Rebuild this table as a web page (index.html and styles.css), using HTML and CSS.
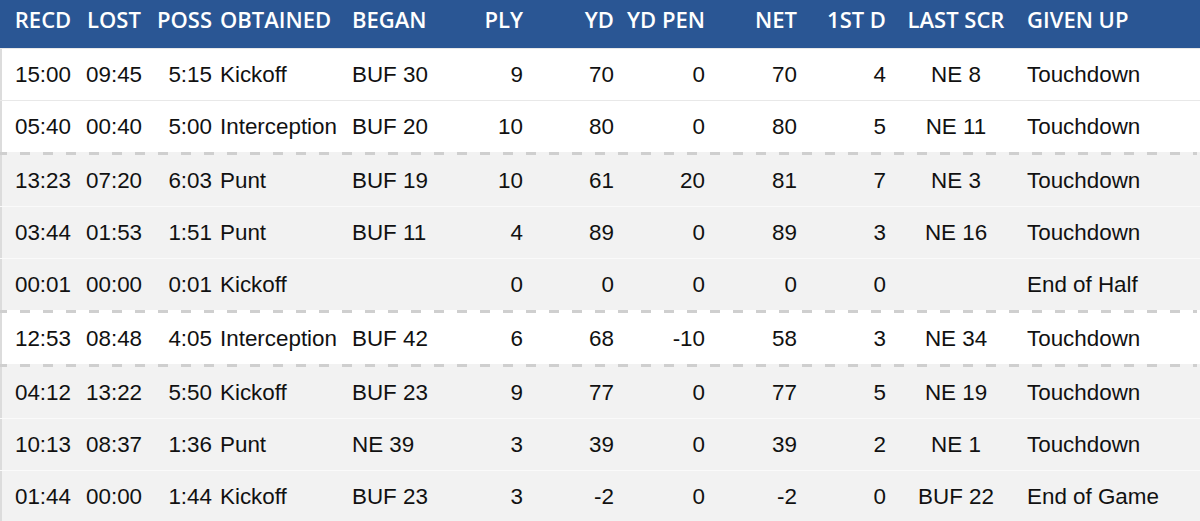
FILE: index.html
```html
<!DOCTYPE html>
<html>
<head>
<meta charset="utf-8">
<link rel="stylesheet" href="styles.css">
</head>
<body>
<div class="drives">
  <div class="row head">
    <div class="c1">RECD</div><div class="c2">LOST</div><div class="c3">POSS</div><div class="c4">OBTAINED</div><div class="c5">BEGAN</div><div class="c6">PLY</div><div class="c7">YD</div><div class="c8">YD PEN</div><div class="c9">NET</div><div class="c10">1ST D</div><div class="c11">LAST SCR</div><div class="c12">GIVEN UP</div>
  </div>
  <div class="row white">
    <div class="c1">15:00</div><div class="c2">09:45</div><div class="c3">5:15</div><div class="c4">Kickoff</div><div class="c5">BUF 30</div><div class="c6">9</div><div class="c7">70</div><div class="c8">0</div><div class="c9">70</div><div class="c10">4</div><div class="c11">NE 8</div><div class="c12">Touchdown</div>
  </div>
  <div class="row white">
    <div class="c1">05:40</div><div class="c2">00:40</div><div class="c3">5:00</div><div class="c4">Interception</div><div class="c5">BUF 20</div><div class="c6">10</div><div class="c7">80</div><div class="c8">0</div><div class="c9">80</div><div class="c10">5</div><div class="c11">NE 11</div><div class="c12">Touchdown</div>
  </div>
  <div class="row gray dash">
    <div class="c1">13:23</div><div class="c2">07:20</div><div class="c3">6:03</div><div class="c4">Punt</div><div class="c5">BUF 19</div><div class="c6">10</div><div class="c7">61</div><div class="c8">20</div><div class="c9">81</div><div class="c10">7</div><div class="c11">NE 3</div><div class="c12">Touchdown</div>
  </div>
  <div class="row gray">
    <div class="c1">03:44</div><div class="c2">01:53</div><div class="c3">1:51</div><div class="c4">Punt</div><div class="c5">BUF 11</div><div class="c6">4</div><div class="c7">89</div><div class="c8">0</div><div class="c9">89</div><div class="c10">3</div><div class="c11">NE 16</div><div class="c12">Touchdown</div>
  </div>
  <div class="row gray">
    <div class="c1">00:01</div><div class="c2">00:00</div><div class="c3">0:01</div><div class="c4">Kickoff</div><div class="c5"></div><div class="c6">0</div><div class="c7">0</div><div class="c8">0</div><div class="c9">0</div><div class="c10">0</div><div class="c11"></div><div class="c12">End of Half</div>
  </div>
  <div class="row white dash">
    <div class="c1">12:53</div><div class="c2">08:48</div><div class="c3">4:05</div><div class="c4">Interception</div><div class="c5">BUF 42</div><div class="c6">6</div><div class="c7">68</div><div class="c8">-10</div><div class="c9">58</div><div class="c10">3</div><div class="c11">NE 34</div><div class="c12">Touchdown</div>
  </div>
  <div class="row gray dash">
    <div class="c1">04:12</div><div class="c2">13:22</div><div class="c3">5:50</div><div class="c4">Kickoff</div><div class="c5">BUF 23</div><div class="c6">9</div><div class="c7">77</div><div class="c8">0</div><div class="c9">77</div><div class="c10">5</div><div class="c11">NE 19</div><div class="c12">Touchdown</div>
  </div>
  <div class="row gray">
    <div class="c1">10:13</div><div class="c2">08:37</div><div class="c3">1:36</div><div class="c4">Punt</div><div class="c5">NE 39</div><div class="c6">3</div><div class="c7">39</div><div class="c8">0</div><div class="c9">39</div><div class="c10">2</div><div class="c11">NE 1</div><div class="c12">Touchdown</div>
  </div>
  <div class="row gray">
    <div class="c1">01:44</div><div class="c2">00:00</div><div class="c3">1:44</div><div class="c4">Kickoff</div><div class="c5">BUF 23</div><div class="c6">3</div><div class="c7">-2</div><div class="c8">0</div><div class="c9">-2</div><div class="c10">0</div><div class="c11">BUF 22</div><div class="c12">End of Game</div>
  </div>
</div>
</body>
</html>
```

FILE: styles.css
```css
html, body {
  margin: 0;
  padding: 0;
  background: #ffffff;
  overflow: hidden;
}

.drives {
  display: flex;
  flex-direction: column;
  width: 1200px;
}

.row {
  display: grid;
  grid-template-columns: 86px 56px 70px 140px 108px 63px 91px 91px 92px 89px 140px 174px;
  white-space: nowrap;
}

.head {
  height: 48px;
  box-sizing: border-box;
  padding-top: 5px;
  background: #2a5694;
  color: #ffffff;
  font-family: "Open Sans", "Noto Sans", sans-serif;
  font-weight: 600;
  font-size: 22px;
  line-height: 28px;
}

.row:not(.head) {
  height: 51px;
  align-items: center;
  font-family: "Liberation Sans", Arial, sans-serif;
  font-size: 22.4px;
  color: #111111;
  box-shadow: inset 2px 0 0 #dcdcdc;
}

.white {
  background-color: #ffffff;
  border-top: 1px solid #e8e8e8;
}

.gray {
  background-color: #f2f2f2;
  border-top: 1px solid #fafafa;
}

.row.dash {
  border-top: 3px solid transparent;
  background-image: repeating-linear-gradient(to right, #cfcfcf 0 10px, transparent 10px 23px);
  background-size: 100% 3px;
  background-repeat: no-repeat;
  background-origin: border-box;
  background-position: -3px 0;
}

.c1, .c2, .c11 { text-align: center; }
.c3, .c6, .c7, .c8, .c9, .c10 { text-align: right; }
.c4 { padding-left: 8px; }
.c5 { text-align: left; }
.c12 { padding-left: 1px; }
```
